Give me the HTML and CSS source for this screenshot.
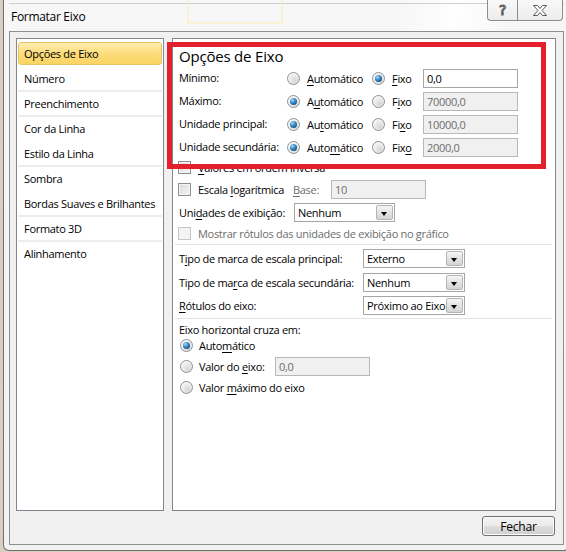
FILE: index.html
```html
<!DOCTYPE html>
<html lang="pt-BR">
  <head>
    <meta charset="UTF-8">
    <title>Formatar Eixo</title>
    <link rel="stylesheet" href="styles.css">
  </head>
  <body>
    <div class="window">
      <div class="titlebar">
        <span class="title">Formatar Eixo</span>
        <div class="caption">
          <span class="cap-btn cap-help">?</span>
          <span class="cap-btn cap-close">
            <svg width="16" height="13" viewBox="0 0 16 13">
              <path d="M1.5 1.5h4l2.5 3 2.5-3h4l-4.5 5 4.5 5h-4l-2.5-3-2.5 3h-4l4.5-5z" fill="#fff" stroke="#5a5a5a" stroke-width="1" stroke-linejoin="round"/>
            </svg>
          </span>
        </div>
      </div>

      <div class="client">
        <div class="panels">
          <ul class="nav">
            <li class="nav-item active">Opções de Eixo</li>
            <li class="nav-item group-end">Número</li>
            <li class="nav-item group-end">Preenchimento</li>
            <li class="nav-item">Cor da Linha</li>
            <li class="nav-item group-end">Estilo da Linha</li>
            <li class="nav-item">Sombra</li>
            <li class="nav-item group-end">Bordas Suaves e Brilhantes</li>
            <li class="nav-item group-end">Formato 3D</li>
            <li class="nav-item">Alinhamento</li>
          </ul>

          <div class="pane">
            <div class="mark-box"></div>

            <h2 class="pane-title">Opções de Eixo</h2>

            <div class="limit-row">
              <span class="limit-label">Mínimo:</span>
              <label class="opt opt-auto"><span class="radio"></span><span><u>A</u>utomático</span></label>
              <label class="opt opt-fixed"><span class="radio on"></span><span><u>F</u>ixo</span></label>
              <span class="field">0,0</span>
            </div>
            <div class="limit-row">
              <span class="limit-label">Máximo:</span>
              <label class="opt opt-auto"><span class="radio on"></span><span>A<u>u</u>tomático</span></label>
              <label class="opt opt-fixed"><span class="radio"></span><span>F<u>i</u>xo</span></label>
              <span class="field off">70000,0</span>
            </div>
            <div class="limit-row">
              <span class="limit-label">Unidade principal:</span>
              <label class="opt opt-auto"><span class="radio on"></span><span>Au<u>t</u>omático</span></label>
              <label class="opt opt-fixed"><span class="radio"></span><span>Fi<u>x</u>o</span></label>
              <span class="field off">10000,0</span>
            </div>
            <div class="limit-row">
              <span class="limit-label">Unidade secundária:</span>
              <label class="opt opt-auto"><span class="radio on"></span><span>Auto<u>m</u>ático</span></label>
              <label class="opt opt-fixed"><span class="radio"></span><span>Fix<u>o</u></span></label>
              <span class="field off">2000,0</span>
            </div>

            <div class="check-row row-inverse">
              <span class="check"></span><span><u>V</u>alores em ordem inversa</span>
            </div>
            <div class="check-row row-log">
              <span class="check"></span><span class="log-text">Escala <u>l</u>ogarítmica</span>
              <span class="base-label"><u>B</u>ase:</span>
              <span class="field off base-field">10</span>
            </div>
            <div class="unit-row">
              <span class="unit-label">Uni<u>d</u>ades de exibição:</span>
              <span class="combo unit-combo">Nenhum<span class="combo-arrow"></span></span>
            </div>
            <div class="check-row row-show muted">
              <span class="check off"></span><span>Mostrar rótulos das unidades de exibição no <u>g</u>ráfico</span>
            </div>

            <div class="sep"></div>

            <div class="tick-row">
              <span class="tick-label">T<u>i</u>po de marca de escala principal:</span>
              <span class="combo tick-combo">Externo<span class="combo-arrow"></span></span>
            </div>
            <div class="tick-row">
              <span class="tick-label">Tipo de ma<u>r</u>ca de escala secundária:</span>
              <span class="combo tick-combo">Nenhum<span class="combo-arrow"></span></span>
            </div>
            <div class="tick-row">
              <span class="tick-label"><u>R</u>ótulos do eixo:</span>
              <span class="combo tick-combo">Próximo ao Eixo<span class="combo-arrow"></span></span>
            </div>

            <div class="sep"></div>

            <div class="cross-head">Eixo horizontal cruza em:</div>
            <label class="cross-row first"><span class="radio on"></span><span>Auto<u>m</u>ático</span></label>
            <label class="cross-row">
              <span class="radio"></span><span class="cross-text">Valor do <u>e</u>ixo:</span>
              <span class="field off cross-field">0,0</span>
            </label>
            <label class="cross-row"><span class="radio"></span><span>Valor <u>m</u>áximo do eixo</span></label>
          </div>
        </div>

        <div class="footer">
          <button class="btn">Fechar</button>
        </div>
      </div>
    </div>
  </body>
</html>
```

FILE: styles.css
```css
* {
  box-sizing: border-box;
}
html, body {
  margin: 0;
  height: 100%;
}
body {
  background: #d8cfc3;
  font-family: "Open Sans", "Noto Sans", sans-serif;
  font-size: 11px;
  letter-spacing: -0.3px;
  color: #000;
  overflow: hidden;
}
u {
  text-decoration: underline;
  text-underline-offset: 2px;
}

/* window frame */
.window {
  margin-left: 3px;
  width: 567px;
  height: 551px;
  padding: 0 5px 5px 5px;
  border: 1px solid #6e6e6e;
  border-top: none;
  border-radius: 0 0 6px 6px;
  background: linear-gradient(#f7f7f7, #f2f2f2);
}
.titlebar {
  position: relative;
  display: flex;
  align-items: flex-start;
  height: 31px;
  background:
    linear-gradient(#cfcfcf, #cfcfcf) 0 3px / 100% 1px no-repeat,
    linear-gradient(100deg, transparent 70%, rgba(255,255,255,0.9) 80%, transparent 90%);
}
.titlebar::before {
  content: "";
  position: absolute;
  left: 178px;
  top: 0;
  width: 92px;
  height: 22px;
  border: 2px solid rgba(250, 238, 170, 0.45);
  border-top: none;
}
.title {
  margin: 9px 0 0 2px;
  font-size: 12px;
  line-height: 16px;
}
.caption {
  display: flex;
  margin-left: auto;
  margin-right: 1px;
}
.cap-btn {
  display: flex;
  align-items: center;
  justify-content: center;
  height: 21px;
  border: 1px solid #8d8d8d;
  border-top: none;
  background: linear-gradient(#f9f9f9, #ececec);
}
.cap-help {
  width: 30px;
  border-radius: 0 0 0 4px;
  border-right: none;
  font-family: "DejaVu Sans", sans-serif;
  font-size: 14px;
  color: #fff;
  -webkit-text-stroke: 1px #555;
}
.cap-close {
  width: 46px;
  border-radius: 0 0 4px 0;
}

/* client area */
.client {
  width: 555px;
  height: 514px;
  padding: 6px 7px 0 6px;
  border: 1px solid #8e8f8f;
  background: #f0f0f0;
}
.panels {
  display: flex;
  gap: 8px;
  height: 473px;
}

/* left navigation */
.nav {
  width: 148px;
  margin: 0;
  padding: 3px 1px;
  list-style: none;
  border: 1px solid #828790;
  background: #fff;
}
.nav-item {
  height: 25px;
  padding-left: 6px;
  line-height: 23px;
  border-bottom: 2px solid transparent;
  white-space: nowrap;
}
.nav-item.group-end {
  border-bottom-color: #ededed;
}
.nav-item.active {
  height: 23px;
  margin-bottom: 2px;
  line-height: 21px;
  padding-left: 5px;
  border: 1px solid #e5c365;
  border-radius: 3px;
  background: linear-gradient(#fdedb0, #fcdc7c 50%, #fbd462);
}

/* right pane */
.pane {
  position: relative;
  flex: 1;
  padding: 0 0 0 6px;
  border: 1px solid #828790;
  background: #fff;
  white-space: nowrap;
}
.mark-box {
  position: absolute;
  left: -6px;
  top: 3px;
  width: 379px;
  height: 127px;
  border: 5px solid #e3202b;
  z-index: 2;
}
.pane-title {
  margin: 7px 0 0 0;
  font-size: 15px;
  font-weight: normal;
  line-height: 21px;
  letter-spacing: -0.2px;
}
.limit-row {
  display: flex;
  align-items: center;
  height: 23px;
}
.limit-label {
  width: 108px;
  margin-top: -3px;
}
.opt {
  display: flex;
  align-items: center;
  gap: 7px;
}
.opt-auto {
  width: 85px;
}
.opt-fixed {
  width: 51px;
}

.radio {
  flex: none;
  position: relative;
  width: 13px;
  height: 13px;
  border: 1px solid #8f8f8f;
  border-radius: 50%;
  background: radial-gradient(circle at 65% 70%, #d6d6d6, #fafafa 80%);
}
.radio.on::after {
  content: "";
  position: absolute;
  left: 2px;
  top: 2px;
  width: 7px;
  height: 7px;
  border-radius: 50%;
  background: radial-gradient(circle at 35% 30%, #a6dcf7 0, #3a8cc9 40%, #0d3f73 90%);
}
.check {
  flex: none;
  width: 13px;
  height: 13px;
  border: 1px solid #8e8f8f;
  background: linear-gradient(135deg, #d8d8d8, #f6f6f6);
  box-shadow: inset 0 0 0 1px #f4f4f4;
}
.check.off {
  border-color: #c6c6c6;
  background: #f4f4f4;
}

.field {
  display: flex;
  align-items: center;
  width: 95px;
  height: 19px;
  padding-left: 3px;
  border: 1px solid #a6a6a6;
  background: #fff;
}
.field.off {
  border-color: #b8b8b8;
  background: #f0f0f0;
  color: #6d6d6d;
}

.check-row {
  display: flex;
  align-items: center;
  gap: 7px;
  margin-left: -1px;
}
.row-inverse {
  height: 17px;
}
.row-log {
  height: 26px;
}
.log-text {
  width: 88px;
}
.base-label {
  width: 31px;
  color: #6d6d6d;
}
.unit-row {
  display: flex;
  align-items: center;
  height: 20px;
}
.unit-label {
  width: 115px;
}
.row-show {
  height: 22px;
}
.muted {
  color: #6d6d6d;
}

.combo {
  position: relative;
  display: flex;
  align-items: center;
  height: 19px;
  padding-left: 3px;
  border: 1px solid #a6a6a6;
  background: #fff;
}
.combo-arrow {
  position: absolute;
  right: 1px;
  top: 1px;
  bottom: 1px;
  width: 17px;
  border: 1px solid #b4b4b4;
  border-radius: 2px;
  background: linear-gradient(#f6f6f6, #e2e2e2 50%, #d4d4d4);
}
.combo-arrow::after {
  content: "";
  position: absolute;
  left: 4px;
  top: 6px;
  border-left: 3.5px solid transparent;
  border-right: 3.5px solid transparent;
  border-top: 4px solid #000;
}
.unit-combo {
  width: 101px;
}

.sep {
  height: 1px;
  margin: 0 3px 2px -4px;
  background: #e3e3e3;
}
.tick-row {
  display: flex;
  align-items: center;
  height: 23.5px;
}
.tick-label {
  width: 184px;
}
.tick-combo {
  width: 102px;
}

.cross-head {
  margin-top: 3px;
  line-height: 16px;
}
.cross-row {
  display: flex;
  align-items: center;
  gap: 6px;
  height: 21px;
  margin-left: 1px;
}
.cross-row.first {
  margin-top: -3px;
}
.cross-text {
  width: 70px;
}

/* bottom buttons */
.footer {
  display: flex;
  justify-content: flex-end;
  padding: 5px 1px 0 0;
}
.btn {
  width: 73px;
  height: 20px;
  padding: 0;
  border: 1px solid #707070;
  border-radius: 3px;
  background: linear-gradient(#f2f2f2, #ebebeb 50%, #dddddd 51%, #cfcfcf);
  box-shadow: inset 0 0 0 1px #fcfcfc;
  font-family: inherit;
  font-size: 12px;
  letter-spacing: -0.2px;
  color: #000;
}
```
